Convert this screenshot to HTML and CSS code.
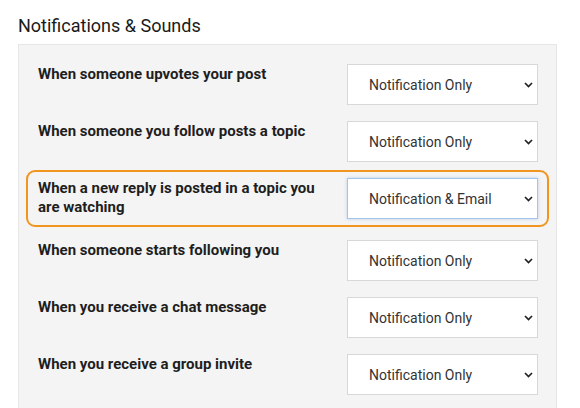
FILE: index.html
```html
<!DOCTYPE html>
<html>
<head>
<meta charset="utf-8">
<link rel="stylesheet" href="styles.css">
</head>
<body>
<div class="page">
  <h2 class="title">Notifications &amp; Sounds</h2>
  <div class="panel">
    <div class="row">
      <div class="label">When someone upvotes your post</div>
      <div class="select"><span>Notification Only</span><svg class="chev" width="9" height="6" viewBox="0 0 9 6"><path d="M1 1L4.5 4.5L8 1" fill="none" stroke="#222" stroke-width="1.7"/></svg></div>
    </div>
    <div class="row">
      <div class="label">When someone you follow posts a topic</div>
      <div class="select"><span>Notification Only</span><svg class="chev" width="9" height="6" viewBox="0 0 9 6"><path d="M1 1L4.5 4.5L8 1" fill="none" stroke="#222" stroke-width="1.7"/></svg></div>
    </div>
    <div class="row row-active">
      <div class="label">When a new reply is posted in a topic you are watching</div>
      <div class="select select-focus"><span>Notification &amp; Email</span><svg class="chev" width="9" height="6" viewBox="0 0 9 6"><path d="M1 1L4.5 4.5L8 1" fill="none" stroke="#222" stroke-width="1.7"/></svg></div>
    </div>
    <div class="row">
      <div class="label">When someone starts following you</div>
      <div class="select"><span>Notification Only</span><svg class="chev" width="9" height="6" viewBox="0 0 9 6"><path d="M1 1L4.5 4.5L8 1" fill="none" stroke="#222" stroke-width="1.7"/></svg></div>
    </div>
    <div class="row">
      <div class="label">When you receive a chat message</div>
      <div class="select"><span>Notification Only</span><svg class="chev" width="9" height="6" viewBox="0 0 9 6"><path d="M1 1L4.5 4.5L8 1" fill="none" stroke="#222" stroke-width="1.7"/></svg></div>
    </div>
    <div class="row">
      <div class="label">When you receive a group invite</div>
      <div class="select"><span>Notification Only</span><svg class="chev" width="9" height="6" viewBox="0 0 9 6"><path d="M1 1L4.5 4.5L8 1" fill="none" stroke="#222" stroke-width="1.7"/></svg></div>
    </div>
  </div>
</div>
</body>
</html>
```
FILE: styles.css
```css
html, body {
  margin: 0;
  padding: 0;
  background: #ffffff;
}
body {
  font-family: Roboto, "Liberation Sans", Arial, sans-serif;
  color: #1e1e1e;
}
.page {
  padding: 14px 0 0 18px;
}
.title {
  margin: 0 0 6px 0;
  font-size: 18px;
  line-height: 24px;
  font-weight: 400;
  color: #1a1a1a;
}
.panel {
  width: 539px;
  box-sizing: border-box;
  background: #f4f4f4;
  border: 1px solid #e6e6e6;
  padding: 11px 7px 20px 7px;
}
.row {
  display: flex;
  justify-content: space-between;
  align-items: flex-start;
  border: 2px solid transparent;
  border-radius: 9px;
  padding: 6px 9px 6px 10px;
}
.row-active {
  border-color: #f2951f;
  margin-bottom: 5px;
}
.label {
  flex: 1;
  padding: 1px 26px 0 0;
  font-size: 15px;
  line-height: 19px;
  font-weight: 700;
  color: #1e1e1e;
}
.select {
  flex: 0 0 191px;
  height: 41px;
  box-sizing: border-box;
  display: flex;
  align-items: center;
  justify-content: space-between;
  background: #ffffff;
  border: 1px solid #d8d8d8;
  padding: 0 4px 0 21px;
  font-size: 14px;
  color: #333333;
}
.select-focus {
  border-color: #a2c4ee;
  box-shadow: 0 0 3px rgba(120, 160, 220, 0.45);
}
.chev {
  display: block;
}
```
